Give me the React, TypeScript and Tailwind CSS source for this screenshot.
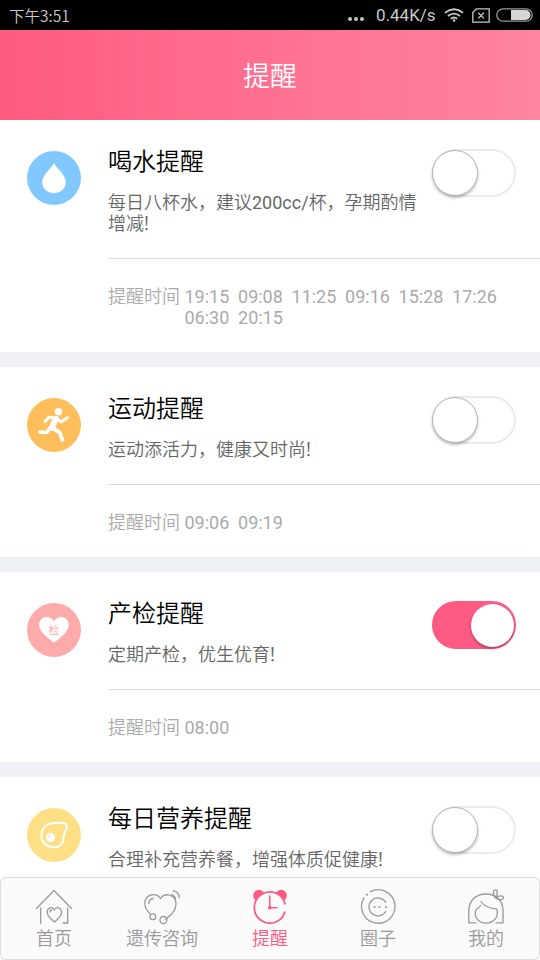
import { useState } from "react";
import type { ReactNode } from "react";
import { clsx } from "clsx";

type Reminder = {
  id: string;
  title: string;
  description: ReactNode;
  times: string[];
  enabled: boolean;
  color: string;
  icon: ReactNode;
};

const DropIcon = () => (
  <svg viewBox="0 0 54 54" className="h-full w-full" fill="#fff">
    <path d="M27 12C25 16.500 15.200 24 15.200 31C15.200 37.800 20.300 42 27 42C33.700 42 38.800 37.800 38.800 31C38.800 24 29 16.500 27 12Z" />
  </svg>
);

const RunnerIcon = () => (
  <svg
    viewBox="0 0 54 54"
    className="h-full w-full"
    fill="none"
    stroke="#fff"
    strokeLinecap="round"
    strokeLinejoin="round"
  >
    <circle cx="31.500" cy="13.700" r="3.700" fill="#fff" stroke="none" />
    <path d="M18.200 23.300L21.700 19.700Q22.500 19 23.700 19.200L29 20.200" strokeWidth="3" />
    <path d="M30 20.500L33.200 23.300Q34 24 35 23.300L40.500 19.700" strokeWidth="3" />
    <path d="M29 20.800L24.700 30" strokeWidth="6" />
    <path d="M23.800 29L20.500 33.500Q19.700 34.600 18.300 34.500L13 34" strokeWidth="3.700" />
    <path d="M25.200 30L31.300 33.500Q32.600 34.300 33.100 35.700L35.400 41.800" strokeWidth="3.800" />
  </svg>
);

const CheckupIcon = () => (
  <svg viewBox="0 0 54 54" className="h-full w-full">
    <path
      fill="#fff"
      d="M27 39.700C23.500 36.800 12.200 29.800 12.200 21.800C12.200 17.300 15.600 14 19.800 14C23.300 14 25.700 15.800 27 18.400C28.300 15.800 30.700 14 34.200 14C38.400 14 41.800 17.300 41.800 21.800C41.800 29.800 30.500 36.800 27 39.700Z"
    />
    <text x="27" y="31" textAnchor="middle" fontSize="10.500" fontWeight="350" fill="#fb9b9d">
      检
    </text>
  </svg>
);

const EggIcon = () => (
  <svg viewBox="0 0 54 54" className="h-full w-full" fill="none" stroke="#fff">
    <path
      d="M14.500 27.500C14.500 19 21 15 30 14.800C36 14.600 41 15 39.800 19.500C38.800 23 36.700 25 36.500 30C36 36.500 32 39.500 27 39.300C19 39 14.500 34 14.500 27.500Z"
      strokeWidth="2"
    />
    <circle cx="23.500" cy="29.500" r="4.700" fill="#fff" stroke="none" />
    <path d="M20.800 29.300Q21.200 27 23.400 26.600" stroke="#ffdf86" strokeWidth="1" strokeLinecap="round" />
  </svg>
);

const initialReminders: Reminder[] = [
  {
    id: "water",
    title: "喝水提醒",
    description: (
      <>
        每日八杯水，建议<span className="font-normal">200cc/</span>杯，孕期酌情增减
      </>
    ),
    times: ["19:15", "09:08", "11:25", "09:16", "15:28", "17:26", "06:30", "20:15"],
    enabled: false,
    color: "bg-[#80c8ff]",
    icon: <DropIcon />,
  },
  {
    id: "sport",
    title: "运动提醒",
    description: "运动添活力，健康又时尚",
    times: ["09:06", "09:19"],
    enabled: false,
    color: "bg-[#ffbe5c]",
    icon: <RunnerIcon />,
  },
  {
    id: "checkup",
    title: "产检提醒",
    description: "定期产检，优生优育",
    times: ["08:00"],
    enabled: true,
    color: "bg-[#ffaaab]",
    icon: <CheckupIcon />,
  },
  {
    id: "nutrition",
    title: "每日营养提醒",
    description: "合理补充营养餐，增强体质促健康",
    times: [],
    enabled: false,
    color: "bg-[#ffdf86]",
    icon: <EggIcon />,
  },
];

const tabs: { label: string; icon: ReactNode }[] = [
  {
    label: "首页",
    icon: (
      <>
        <path d="M.5 19.500L18 1.500L35.500 19.500M4.700 19V34.500M27 34H31.700V19" />
        <path d="M14 29L18.500 33C21.500 30.200 25.500 27.300 25.500 23.500C25.500 18.300 20 17 18.300 21C16.500 17 11.200 18.500 11.200 23C11.200 25.500 12.500 27.500 14 29M14 23Q14.200 21.300 15.700 21" />
      </>
    ),
  },
  {
    label: "遗传咨询",
    icon: (
      <>
        <path d="M6.200 25C2.500 21.500.8 18.300.8 14.500C.8 5 12 3 16.500 9.500C21 3 32 5.500 32 15C32 22 27 26 21.500 30.200M4.800 14.500Q5 10.500 9 9.500" />
        <circle cx="8.800" cy="27.800" r="2.900" />
        <circle cx="19.500" cy="31" r="3.500" />
        <path d="M27.500 5.700Q30.800 6.500 31.500 10M29 1.700Q35 3 35.300 8.700" />
      </>
    ),
  },
  {
    label: "提醒",
    icon: (
      <>
        <circle cx="6.900" cy="6.500" r="5.700" fill="currentColor" stroke="none" />
        <circle cx="29.100" cy="6.500" r="5.700" fill="currentColor" stroke="none" />
        <circle cx="18" cy="18.500" r="15.400" fill="#fafafa" stroke="none" />
        <path d="M33.200 15.500A15.600 15.600 0 1 0 33 22.500" strokeWidth="1.800" strokeLinecap="butt" />
        <path d="M17.800 7V18.700M18 18.700H25" strokeWidth="1.500" />
        <circle cx="17.800" cy="18.700" r="1.900" fill="currentColor" stroke="none" />
      </>
    ),
  },
  {
    label: "圈子",
    icon: (
      <>
        <path d="M10.500 2.700A16.700 16.700 0 1 1 4 8.800" />
        <path d="M25.600 13.200A9 9 0 1 0 25.700 22.500" />
        <path d="M6.800 5.800H6.900M14.500 18H14.600M19.500 18H19.600M26 18H26.100" strokeWidth="2" />
      </>
    ),
  },
  {
    label: "我的",
    icon: (
      <>
        <path d="M8 33.800H.8V22C.8 11.500 8 5 18 5C28.500 5 35 12 35 22V33.800H28" />
        <path d="M13 12.500C16 17 22 19.500 28.800 20.200C31 27.500 26 34.200 18 34.200C10 34.200 5.500 27.500 8 20.500Q11 19 12.500 16.500" />
        <path d="M27.500 9C24.500 5.500 25 .8 27.300.8C29.800.8 30.300 5 27.500 9C31 5.800 35.500 6.500 35.500 8.700C35.500 11 31 11.500 27.500 9Z" />
      </>
    ),
  },
];

const StatusBar = () => (
  <div className="flex h-[30px] shrink-0 items-center justify-between bg-black pl-[9px] pr-[7px] text-[#c8c8c8]">
    <span className="pt-[2px] font-['Noto_Sans_CJK_SC',sans-serif] text-[15.500px]">下午3:51</span>
    <div className="flex items-center">
      <svg viewBox="0 0 18 6" className="mt-[8px] h-[6px] w-[18px]" fill="currentColor">
        <circle cx="3" cy="3" r="2" />
        <circle cx="9" cy="3" r="2" />
        <circle cx="15" cy="3" r="2" />
      </svg>
      <span className="ml-[11px] w-[60px] whitespace-nowrap pt-[2px] text-[17px] font-normal">0.44K/s</span>
      <svg
        viewBox="0 0 20 14"
        className="ml-[8px] h-[14px] w-[20px]"
        fill="none"
        stroke="currentColor"
        strokeWidth="1.800"
      >
        <path d="M1 4.700Q10-2.300 19 4.700M4 8Q10 3.200 16 8M6.800 10.800Q10 8.200 13.200 10.800" />
        <circle cx="10" cy="12.500" r="1.300" fill="currentColor" stroke="none" />
      </svg>
      <svg
        viewBox="0 0 18 15"
        className="ml-[8px] h-[15px] w-[18px]"
        fill="none"
        stroke="currentColor"
        strokeWidth="1.300"
      >
        <path d="M4.500.8H17.200V14.200H.8V4.500ZM6.300 4.800L11.900 10.400M11.900 4.800L6.300 10.400" />
      </svg>
      <svg viewBox="0 0 37 14" className="ml-[6px] h-[14px] w-[37px]">
        <rect x=".8" y=".8" width="35.400" height="12.400" rx="6.200" fill="none" stroke="#9a9a9a" strokeWidth="1.300" />
        <path d="M15 2H29.500A5 5 0 0 1 29.500 12H15Z" fill="#d6d6d6" />
      </svg>
    </div>
  </div>
);

const Switch = ({ checked, label, onChange }: { checked: boolean; label: string; onChange: () => void }) => (
  <button
    role="switch"
    aria-checked={checked}
    aria-label={label}
    onClick={onChange}
    className={clsx(
      "mt-[29px] flex h-[48px] w-[84px] shrink-0 items-center rounded-full border-2 transition-colors",
      checked ? "justify-end border-[#ff5a82] bg-[#ff5a82]" : "justify-start border-[#ebebeb] bg-white"
    )}
  >
    <span
      className={clsx(
        "rounded-full bg-white",
        checked
          ? "size-[43px] shadow-[0_2px_3px_rgba(0,0,0,0.3)]"
          : "-ml-[2px] size-[46px] border border-[#b4b4b4] shadow-[0_2px_3px_rgba(0,0,0,0.25)]"
      )}
    />
  </button>
);

const ReminderCard = ({ reminder, onToggle }: { reminder: Reminder; onToggle: () => void }) => (
  <section className="flex shrink-0 items-start bg-white pl-[27px]">
    <div className={clsx("mt-[31px] size-[54px] shrink-0 overflow-hidden rounded-full", reminder.color)}>
      {reminder.icon}
    </div>
    <div className="ml-[27px] min-w-0 flex-1">
      <div className="flex items-start justify-between border-b border-[#dcdcdc] pr-6 pb-6">
        <div className="w-[315px] pt-6">
          <h2 className="text-2xl leading-9 text-black">{reminder.title}</h2>
          <p className="mt-3 text-lg leading-[21px] text-[#666]">
            {reminder.description}
            <span className="-ml-[2px]">！</span>
          </p>
        </div>
        <div className="-mb-6 flex">
          <Switch checked={reminder.enabled} label={reminder.title} onChange={onToggle} />
        </div>
      </div>
      {reminder.times.length > 0 && (
        <div className="flex pt-[27px] pr-6 pb-6 text-lg leading-[21px] text-[#aaa]">
          <span className="w-[76.500px] shrink-0">提醒时间</span>
          <div className="flex flex-wrap gap-x-[8.700px] font-normal">
            {reminder.times.map((time) => (
              <span key={time}>{time}</span>
            ))}
          </div>
        </div>
      )}
    </div>
  </section>
);

const App = () => {
  const [reminders, setReminders] = useState(initialReminders);
  const [activeTab, setActiveTab] = useState(2);

  const toggleReminder = (id: string) => {
    setReminders(reminders.map((item) => (item.id === id ? { ...item, enabled: !item.enabled } : item)));
  };

  return (
    <div className="flex h-[960px] w-[540px] flex-col overflow-hidden bg-white font-[Roboto,'Noto_Sans_CJK_SC',sans-serif] font-[350]">
      <StatusBar />
      <header className="flex h-[90px] shrink-0 items-center justify-center bg-linear-to-r from-[#ff5a80] to-[#ff84a0] pt-[4px]">
        <h1 className="text-[27px] font-[350] text-white">提醒</h1>
      </header>

      <main className="flex min-h-0 flex-1 flex-col gap-[15px] overflow-hidden bg-[#f0f0f7]">
        {reminders.map((reminder) => (
          <ReminderCard key={reminder.id} reminder={reminder} onToggle={() => toggleReminder(reminder.id)} />
        ))}
      </main>

      {/* Bottom tabs */}
      <nav className="flex h-[83px] shrink-0 rounded-md bg-[#fafafa] inset-ring inset-ring-[#dcdcdc]">
        {tabs.map((tab, index) => (
          <button
            key={tab.label}
            onClick={() => setActiveTab(index)}
            className={clsx(
              "flex flex-1 flex-col items-center pt-[12px]",
              index === activeTab ? "text-[#ff5a82]" : "text-[#999]"
            )}
          >
            <svg
              viewBox="0 0 36 36"
              className="size-9 shrink-0"
              fill="none"
              stroke="currentColor"
              strokeWidth="1.300"
              strokeLinecap="round"
              strokeLinejoin="round"
            >
              {tab.icon}
            </svg>
            <span className="pt-[1px] text-lg leading-[26px]">{tab.label}</span>
          </button>
        ))}
      </nav>
    </div>
  );
};

export default App;
